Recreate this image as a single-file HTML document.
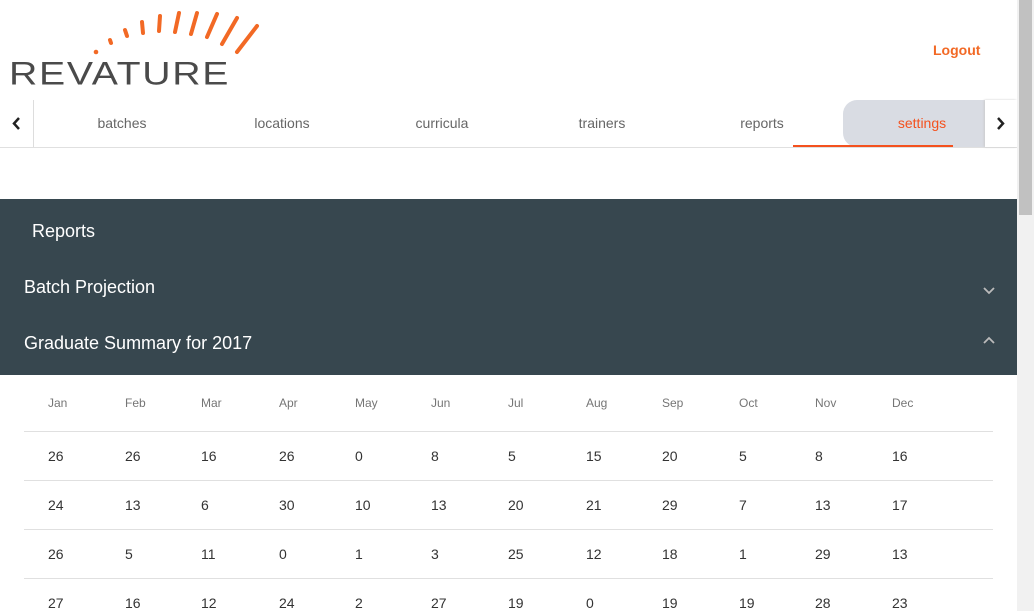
<!DOCTYPE html>
<html><head><style>
*{margin:0;padding:0;box-sizing:border-box}
body{width:1034px;height:611px;overflow:hidden;background:#fff;font-family:"Liberation Sans",Arial,sans-serif;position:relative}
.abs{position:absolute}
.logo{left:9px;top:58px;font-size:35px;letter-spacing:1.5px;color:#4a4a4a;line-height:1;transform-origin:0 0;transform:scale(1.12,0.92)}
.logout{left:933px;top:42px;color:#f26925;font-weight:bold;font-size:14px}
.nav{left:0;top:100px;width:1017px;height:48px;border-bottom:1px solid #e0e0e0}
.tab{position:absolute;top:0;width:160px;height:47px;line-height:47px;text-align:center;font-size:14px;color:#666}
.dark{left:0;top:199px;width:1017px;height:176px;background:#37474f;color:#fff}
.th,.td{position:absolute;font-size:12px;color:#757575}
.td{font-size:14px;color:#333}
.line{position:absolute;left:24px;width:969px;height:1px;background:#e0e0e0}
.sb{left:1017px;top:0;width:17px;height:611px;background:#f1f1f1}
</style></head><body>
<svg class="abs" style="left:0;top:0" width="270" height="60">
<g stroke="#f26925" stroke-width="4" stroke-linecap="round">
<line x1="110" y1="40" x2="111" y2="43"/><line x1="125" y1="30" x2="127" y2="36"/><line x1="142" y1="22" x2="143" y2="33"/><line x1="160" y1="16" x2="159" y2="31"/><line x1="179" y1="13" x2="175" y2="32"/><line x1="197" y1="13" x2="191" y2="34"/><line x1="217" y1="14" x2="207" y2="37"/><line x1="237" y1="18" x2="222" y2="44"/><line x1="257" y1="26" x2="237" y2="52"/></g>
<circle cx="96" cy="52" r="2.3" fill="#f26925"/></svg>
<div class="abs logo">REVATURE</div>
<div class="abs logout">Logout</div>
<div class="abs nav">
<div style="position:absolute;left:0;top:0;width:34px;height:47px;border-right:1px solid #ddd"><svg width="34" height="47"><path d="M19 18 L14 23.5 L19 29" stroke="#222" stroke-width="2.5" fill="none"/></svg></div>
<div class="tab" style="left:42px">batches</div>
<div class="tab" style="left:202px">locations</div>
<div class="tab" style="left:362px">curricula</div>
<div class="tab" style="left:522px">trainers</div>
<div class="tab" style="left:682px">reports</div>
<div style="position:absolute;left:843px;top:0;width:142px;height:47px;background:#d9dce3;border-radius:14px 0 0 14px"></div>
<div class="tab" style="left:842px;color:#f4511e">settings</div>
<div style="position:absolute;left:793px;top:45px;width:160px;height:2px;background:#f4511e"></div>
<div style="position:absolute;left:985px;top:0;width:32px;height:47px;background:#fff;box-shadow:-1px 0 2px #ccc"><svg width="32" height="47"><path d="M13 18 L18 23.5 L13 29" stroke="#222" stroke-width="2.5" fill="none"/></svg></div>
</div>
<div class="abs dark">
<div class="abs" style="left:32px;top:22px;font-size:18px">Reports</div>
<div class="abs" style="left:24px;top:78px;font-size:18px">Batch Projection</div>
<div class="abs" style="left:24px;top:134px;font-size:18px">Graduate Summary for 2017</div>
<svg class="abs" style="left:982px;top:87px" width="14" height="10"><path d="M2 2 L7 7 L12 2" stroke="#bbb" stroke-width="1.8" fill="none"/></svg>
<svg class="abs" style="left:982px;top:137px" width="14" height="10"><path d="M2 7 L7 2 L12 7" stroke="#bbb" stroke-width="1.8" fill="none"/></svg>
</div>
<div id="tbl"></div>
<div class="abs sb"><div style="position:absolute;left:2px;top:0;width:13px;height:215px;background:#c1c1c1"></div></div>
<script>
var xs=[48,125,201,279,355,431,508,586,662,739,815,892];
var m="Jan Feb Mar Apr May Jun Jul Aug Sep Oct Nov Dec".split(" ");
var d=[[26,26,16,26,0,8,5,15,20,5,8,16],[24,13,6,30,10,13,20,21,29,7,13,17],[26,5,11,0,1,3,25,12,18,1,29,13],[27,16,12,24,2,27,19,0,19,19,28,23]];
var h="";
for(var i=0;i<12;i++)h+='<div class="th" style="left:'+xs[i]+'px;top:396px">'+m[i]+'</div>';
for(var r=0;r<4;r++){h+='<div class="line" style="top:'+(431+49*r)+'px"></div>';
for(var i=0;i<12;i++)h+='<div class="td" style="left:'+xs[i]+'px;top:'+(448+49*r)+'px">'+d[r][i]+'</div>';}
document.getElementById("tbl").innerHTML=h;
</script>
</body></html>
